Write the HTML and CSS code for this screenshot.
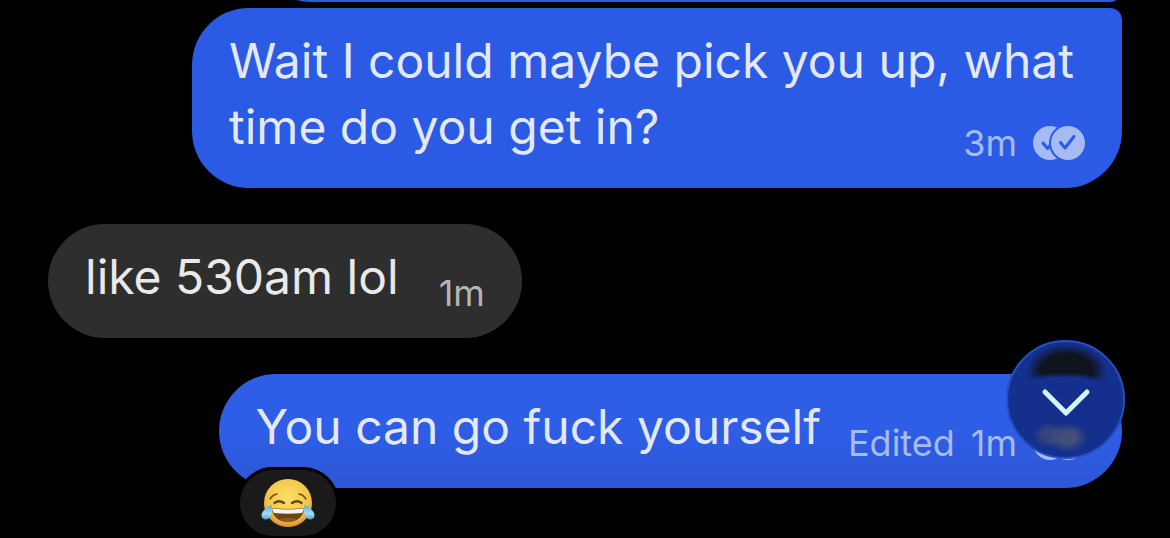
FILE: index.html
```html
<!DOCTYPE html>
<html lang="en">
<head>
    <meta charset="UTF-8">
    <meta name="viewport" content="width=device-width, initial-scale=1.0">
    <title>Chat</title>
    <link rel="stylesheet" href="styles.css">
</head>
<body>
    <!-- shared icons -->
    <svg class="sprite" aria-hidden="true">
        <defs>
            <mask id="readMask">
                <rect width="52" height="34" fill="white"/>
                <circle cx="35" cy="17" r="19" fill="black"/>
                <path d="M10 17l4.500 5.500 10-12" fill="none" stroke="black" stroke-width="3" stroke-linecap="round" stroke-linejoin="round"/>
            </mask>
            <mask id="readMaskFront">
                <rect width="52" height="34" fill="white"/>
                <path d="M27.500 16.500l4.500 5.500 9-11.500" fill="none" stroke="black" stroke-width="3" stroke-linecap="round" stroke-linejoin="round"/>
            </mask>
            <symbol id="read" viewBox="0 0 52 34">
                <circle cx="17" cy="17" r="17" fill="currentColor" mask="url(#readMask)"/>
                <circle cx="35" cy="17" r="17" fill="currentColor" mask="url(#readMaskFront)"/>
            </symbol>
        </defs>
    </svg>

    <main class="chat">
        <div class="bubble sent previous"></div>

        <div class="bubble sent long">
            <span class="text">Wait I could maybe pick you up, what time do you get in?</span>
            <div class="meta">
                <span>3m</span>
                <svg class="read-icon" role="img" aria-label="Read"><use href="#read"/></svg>
            </div>
        </div>

        <div class="bubble received">
            <div class="text">like 530am lol</div>
            <div class="meta"><span>1m</span></div>
        </div>

        <div class="bubble sent last">
            <div class="text">You can go fuck yourself</div>
            <div class="meta">
                <span class="edited">Edited</span>
                <span>1m</span>
                <svg class="read-icon" role="img" aria-label="Read"><use href="#read"/></svg>
            </div>
            <button class="reaction" type="button" aria-label="Face with tears of joy">
                <svg class="emoji" viewBox="0 0 54 50" aria-hidden="true">
                    <defs>
                        <radialGradient id="face" cx="50%" cy="38%" r="62%">
                            <stop offset="0" stop-color="#fae06a"/>
                            <stop offset="0.7" stop-color="#f2c748"/>
                            <stop offset="1" stop-color="#dd9038"/>
                        </radialGradient>
                        <linearGradient id="tear" x1="0" y1="0" x2="0" y2="1">
                            <stop offset="0" stop-color="#4fa8dc"/>
                            <stop offset="0.6" stop-color="#a5ddf5"/>
                            <stop offset="1" stop-color="#4a9fd4"/>
                        </linearGradient>
                    </defs>
                    <circle cx="27" cy="25" r="24" fill="url(#face)"/>
                    <path d="M9 21q3-4.500 7-5M38 16q4 .5 7 5" fill="none" stroke="#7a4a12" stroke-width="1.600" stroke-linecap="round"/>
                    <path d="M13.500 25q4.500-3.500 9.500 0M31 25q5-3.500 9.500 0" fill="none" stroke="#6b4210" stroke-width="2.400" stroke-linecap="round"/>
                    <path d="M10.500 30q16.500 2 33 0c-1 8-7 14-16.500 14s-15.500-6-16.500-14z" fill="#6e4512"/>
                    <path d="M11 30.500q16 2 32 0-.5 3-2 4.500-14 1.500-28 0-1.500-1.500-2-4.500z" fill="#f7f3ea"/>
                    <path d="M18 41q9-2 18 0-4 3-9 3t-9-3z" fill="#8c5c1c"/>
                    <path d="M10.500 27c-5 2-10.500 6.500-10 11 .5 4 6 4.500 8.500 1.500 2.500-3 2-8 1.500-12.500zM43.500 27c5 2 10.500 6.500 10 11-.5 4-6 4.500-8.500 1.500-2.500-3-2-8-1.500-12.500z" fill="url(#tear)"/>
                </svg>
            </button>
        </div>

        <button class="scroll-down" type="button" aria-label="Scroll to bottom">
            <svg class="chevron" viewBox="0 0 50 30" aria-hidden="true">
                <path d="M4 4l21 21 21-21" fill="none" stroke="#d3f3ff" stroke-width="5" stroke-linecap="round" stroke-linejoin="round"/>
            </svg>
        </button>
    </main>
</body>
</html>
```
FILE: styles.css
```css
* {
    box-sizing: border-box;
}

body {
    margin: 0;
    background: #000;
    font-family: Inter, "Liberation Sans", sans-serif;
}

button {
    padding: 0;
    border: none;
    cursor: pointer;
}

.sprite {
    position: absolute;
    width: 0;
    height: 0;
}

.chat {
    position: relative;
    display: flex;
    flex-direction: column;
    gap: 36px;
    height: 100vh;
    padding: 0 48px;
    overflow: hidden;
}

.bubble {
    display: flex;
    flex-shrink: 0;
    align-items: flex-end;
    gap: 40px;
    max-width: 930px;
    padding: 20px 37px 28px;
    border-radius: 57px;
}

.sent {
    align-self: flex-end;
    background: #2b5ae4;
    color: #e3e8fb;
}

.received {
    align-self: flex-start;
    background: #2e2e2e;
    color: #e9e9e9;
}

/* tail end of the message above, scrolled out of view */
.previous {
    width: 868px;
    height: 114px;
    margin-top: -112px;
    margin-bottom: -30px;
    border-bottom-right-radius: 12px;
}

.text,
.long {
    font-size: 48px;
    line-height: 66px;
}

.meta {
    display: flex;
    align-items: center;
    gap: 16px;
    height: 32px;
    margin-bottom: 1px;
    font-size: 36px;
    line-height: 32px;
    white-space: nowrap;
}

/* time floats beside the last line of the text */
.long {
    display: block;
    border-top-right-radius: 12px;
}

.long .meta {
    float: right;
    margin-top: 33px;
}

.last {
    position: relative;
    gap: 27px;
    background: linear-gradient(#2e5de6 50%, #2c57d5);
}

.sent .meta {
    color: #a6baf4;
}

.received .meta {
    color: #b5b5b5;
}

.read-icon {
    width: 52px;
    height: 34px;
}

.reaction {
    position: absolute;
    left: 18px;
    top: 93px;
    display: flex;
    align-items: center;
    justify-content: center;
    width: 102px;
    height: 72px;
    border: 3px solid #000;
    border-radius: 36px;
    background: #1a1a1a;
}

.emoji {
    width: 54px;
    height: 50px;
}

.scroll-down {
    position: absolute;
    right: 45px;
    top: 340px;
    display: flex;
    align-items: center;
    justify-content: center;
    width: 119px;
    height: 119px;
    border: 2px solid #2450c4;
    border-radius: 50%;
    background:
        radial-gradient(ellipse 60px 18px at 48% 42%, #142f8c 70%, transparent),
        radial-gradient(ellipse 40px 28px at 51% 26%, #10141f 65%, transparent),
        radial-gradient(ellipse 20px 15px at 52% 83%, #434f79 40%, transparent),
        radial-gradient(ellipse 17px 13px at 36% 81%, #35457c 40%, transparent),
        radial-gradient(circle, #142f8c 60%, #17369c);
}

.chevron {
    width: 50px;
    height: 30px;
    margin-top: 6px;
}
```
